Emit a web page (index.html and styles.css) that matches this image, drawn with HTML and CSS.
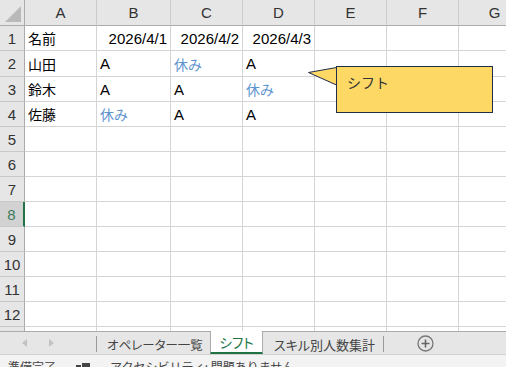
FILE: index.html
```html
<!DOCTYPE html>
<html lang="ja">
<head>
  <meta charset="UTF-8">
  <title>シフト</title>
  <link rel="stylesheet" href="styles.css">
</head>
<body>

<div class="sheet">
  <div class="row head">
    <div class="corner"><span class="corner-mark"></span></div>
    <div class="col-head">A</div>
    <div class="col-head">B</div>
    <div class="col-head">C</div>
    <div class="col-head">D</div>
    <div class="col-head">E</div>
    <div class="col-head">F</div>
    <div class="col-head">G</div>
  </div>

  <div class="row">
    <div class="row-head">1</div>
    <div class="cell jp">名前</div>
    <div class="cell num">2026/4/1</div>
    <div class="cell num">2026/4/2</div>
    <div class="cell num">2026/4/3</div>
    <div class="cell"></div><div class="cell"></div><div class="cell"></div>
  </div>
  <div class="row tall">
    <div class="row-head">2</div>
    <div class="cell jp">山田</div>
    <div class="cell">A</div>
    <div class="cell jp off">休み</div>
    <div class="cell">A</div>
    <div class="cell"></div><div class="cell"></div><div class="cell"></div>
  </div>
  <div class="row">
    <div class="row-head">3</div>
    <div class="cell jp">鈴木</div>
    <div class="cell">A</div>
    <div class="cell">A</div>
    <div class="cell jp off">休み</div>
    <div class="cell"></div><div class="cell"></div><div class="cell"></div>
  </div>
  <div class="row">
    <div class="row-head">4</div>
    <div class="cell jp">佐藤</div>
    <div class="cell jp off">休み</div>
    <div class="cell">A</div>
    <div class="cell">A</div>
    <div class="cell"></div><div class="cell"></div><div class="cell"></div>
  </div>
  <div class="row">
    <div class="row-head">5</div>
    <div class="cell"></div><div class="cell"></div><div class="cell"></div><div class="cell"></div><div class="cell"></div><div class="cell"></div><div class="cell"></div>
  </div>
  <div class="row">
    <div class="row-head">6</div>
    <div class="cell"></div><div class="cell"></div><div class="cell"></div><div class="cell"></div><div class="cell"></div><div class="cell"></div><div class="cell"></div>
  </div>
  <div class="row">
    <div class="row-head">7</div>
    <div class="cell"></div><div class="cell"></div><div class="cell"></div><div class="cell"></div><div class="cell"></div><div class="cell"></div><div class="cell"></div>
  </div>
  <div class="row">
    <div class="row-head selected">8</div>
    <div class="cell"></div><div class="cell"></div><div class="cell"></div><div class="cell"></div><div class="cell"></div><div class="cell"></div><div class="cell"></div>
  </div>
  <div class="row">
    <div class="row-head">9</div>
    <div class="cell"></div><div class="cell"></div><div class="cell"></div><div class="cell"></div><div class="cell"></div><div class="cell"></div><div class="cell"></div>
  </div>
  <div class="row">
    <div class="row-head">10</div>
    <div class="cell"></div><div class="cell"></div><div class="cell"></div><div class="cell"></div><div class="cell"></div><div class="cell"></div><div class="cell"></div>
  </div>
  <div class="row">
    <div class="row-head">11</div>
    <div class="cell"></div><div class="cell"></div><div class="cell"></div><div class="cell"></div><div class="cell"></div><div class="cell"></div><div class="cell"></div>
  </div>
  <div class="row">
    <div class="row-head">12</div>
    <div class="cell"></div><div class="cell"></div><div class="cell"></div><div class="cell"></div><div class="cell"></div><div class="cell"></div><div class="cell"></div>
  </div>
  <div class="row">
    <div class="row-head">13</div>
    <div class="cell"></div><div class="cell"></div><div class="cell"></div><div class="cell"></div><div class="cell"></div><div class="cell"></div><div class="cell"></div>
  </div>

  <!-- コメント -->
  <div class="comment">
    <svg class="comment-tail" width="29" height="22" viewBox="0 0 29 22">
      <polygon points="0.5,6.5 28.5,1.5 28.5,19" fill="#fdd865" stroke="#1f2d4a" stroke-width="1"/>
    </svg>
    <div class="comment-box">シフト</div>
  </div>
</div>

<div class="tabbar">
  <div class="nav">
    <span class="arrow left"></span>
    <span class="arrow right"></span>
  </div>
  <div class="tab first">オペレーター一覧</div>
  <div class="tab active">シフト</div>
  <div class="tab last">スキル別人数集計</div>
  <div class="add">
    <svg width="17" height="17" viewBox="0 0 17 17">
      <circle cx="8.5" cy="8.5" r="7.5" fill="none" stroke="#777" stroke-width="1.3"/>
      <path d="M8.5 4.5v8M4.5 8.5h8" stroke="#666" stroke-width="1.6"/>
    </svg>
  </div>
</div>

<div class="statusbar">
  <span class="status-text">準備完了</span>
  <svg class="status-icon" width="14" height="10" viewBox="0 0 14 10">
    <rect x="0" y="3" width="5" height="7" fill="#444"/>
    <rect x="6" y="1" width="8" height="9" fill="#444"/>
  </svg>
  <span class="status-text">アクセシビリティ: 問題ありません</span>
</div>

</body>
</html>
```

FILE: styles.css
```css
body {
  margin: 0;
  width: 506px;
  height: 367px;
  overflow: hidden;
  background: #fff;
  font-family: 'Liberation Sans', 'Noto Sans CJK JP', sans-serif;
  color: #000;
}
.sheet {
  position: relative;
  height: 331px;
  overflow: hidden;
}
.row {
  display: grid;
  grid-template-columns: 25px 72px 74px 72px 72px 72px 72px 72px;
  height: 25px;
}
.row.head {
  height: 26px;
}
.row.tall {
  height: 26px;
}
.row > div {
  box-sizing: border-box;
  border-right: 1px solid #d4d4d4;
  border-bottom: 1px solid #d4d4d4;
  display: flex;
  align-items: center;
  white-space: nowrap;
  overflow: hidden;
}
.corner {
  position: relative;
  background: #e6e6e6;
  border-right-color: #ababab !important;
  border-bottom-color: #ababab !important;
}
.corner-mark {
  position: absolute;
  right: 3px;
  bottom: 3px;
  width: 16px;
  height: 16px;
  background: #b9b9b9;
  clip-path: polygon(100% 0, 100% 100%, 0 100%);
}
.col-head {
  justify-content: center;
  background: #e6e6e6;
  border-right-color: #cbcbcb !important;
  border-bottom-color: #ababab !important;
  font-size: 15px;
  color: #333;
}
.row-head {
  justify-content: center;
  background: #e6e6e6;
  border-right-color: #ababab !important;
  border-bottom-color: #c9c9c9 !important;
  font-size: 15px;
  color: #333;
}
.row-head.selected {
  background: #d2d2d2;
  border-right: 2px solid #217346 !important;
  color: #3c7a5a;
}
.cell {
  padding: 0 3px;
  font-size: 15px;
}
.cell.jp {
  font-family: 'Noto Sans CJK JP', sans-serif;
  font-size: 14px;
}
.cell.num {
  justify-content: flex-end;
}
.cell.off {
  color: #5f95cf;
}
.comment {
  position: absolute;
  left: 308px;
  top: 66px;
  display: flex;
}
.comment-tail {
  display: block;
  margin-right: -1px;
}
.comment-box {
  width: 157px;
  height: 47px;
  box-sizing: border-box;
  background: #fdd865;
  border: 1px solid #1f2d4a;
  padding: 5px 0 0 10px;
  font-family: 'Noto Sans CJK JP', sans-serif;
  font-size: 14px;
  line-height: 20px;
  color: #333;
  position: relative;
  z-index: 1;
}
.tabbar {
  height: 24px;
  box-sizing: border-box;
  background: #e6e6e6;
  border-top: 1px solid #ababab;
  border-bottom: 1px solid #d0d0d0;
  display: flex;
  align-items: stretch;
  font-family: 'Noto Sans CJK JP', sans-serif;
  font-size: 12.5px;
  font-feature-settings: "palt";
  color: #444;
}
.nav {
  width: 96px;
  flex: none;
  display: flex;
  align-items: center;
  gap: 22px;
  padding-left: 22px;
  box-sizing: border-box;
}
.arrow {
  width: 0;
  height: 0;
  border-top: 4px solid transparent;
  border-bottom: 4px solid transparent;
}
.arrow.left {
  border-right: 5px solid #c2c2c2;
}
.arrow.right {
  border-left: 5px solid #c2c2c2;
}
.tab {
  flex: none;
  display: flex;
  align-items: center;
  white-space: nowrap;
  box-sizing: border-box;
}
.tab.first {
  width: 114px;
  margin: 4px 0 2px;
  padding-left: 10px;
  border-left: 1px solid #9a9a9a;
}
.tab.active {
  width: 53px;
  margin-top: -1px;
  justify-content: center;
  background: #fff;
  color: #217346;
  font-size: 13.5px;
  border-left: 1px solid #ababab;
  border-right: 1px solid #ababab;
  border-bottom: 2px solid #217346;
}
.tab.last {
  width: 121px;
  margin: 4px 0 2px;
  padding-left: 11px;
  border-right: 1px solid #9a9a9a;
  font-size: 13px;
}
.add {
  display: flex;
  align-items: center;
  padding-left: 33px;
}
.statusbar {
  height: 12px;
  overflow: hidden;
  background: #f3f3f3;
  display: flex;
  align-items: flex-start;
  padding: 4px 0 0 8px;
  box-sizing: border-box;
  font-family: 'Noto Sans CJK JP', sans-serif;
  font-size: 12px;
  line-height: 16px;
  color: #444;
}
.status-icon {
  margin: 3px 20px 0 20px;
}
```
